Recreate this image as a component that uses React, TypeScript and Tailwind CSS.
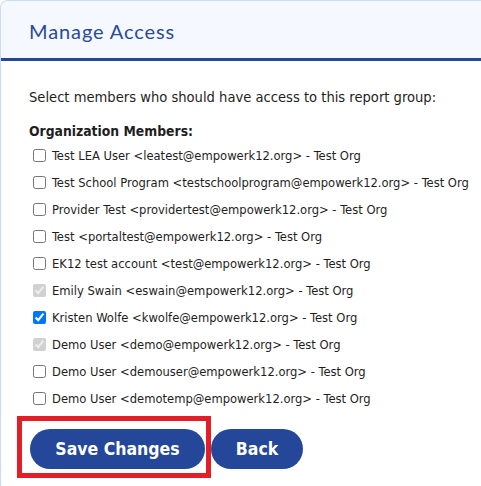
import React from "react";

type Member = { name: string; email: string; checked?: boolean; disabled?: boolean };

const members: Member[] = [
  { name: "Test LEA User", email: "leatest@empowerk12.org" },
  { name: "Test School Program", email: "testschoolprogram@empowerk12.org" },
  { name: "Provider Test", email: "providertest@empowerk12.org" },
  { name: "Test", email: "portaltest@empowerk12.org" },
  { name: "EK12 test account", email: "test@empowerk12.org" },
  { name: "Emily Swain", email: "eswain@empowerk12.org", checked: true, disabled: true },
  { name: "Kristen Wolfe", email: "kwolfe@empowerk12.org", checked: true },
  { name: "Demo User", email: "demo@empowerk12.org", checked: true, disabled: true },
  { name: "Demo User", email: "demouser@empowerk12.org" },
  { name: "Demo User", email: "demotemp@empowerk12.org" },
];

export default function App() {
  return (
    <div className="w-[481px] h-[486px] bg-white overflow-hidden relative">
      <div className="h-full border-l border-t border-[#c6dbf7] rounded-tl-[8px]">
        <div className="h-[60px] bg-[#f5f8fe] border-b-[3px] border-[#24479a] flex items-center pl-[28px] pt-[2px] rounded-tl-[8px]">
          <h1
            className="text-[20px] text-[#2a4a9a] tracking-[0.9px]"
            style={{ fontFamily: "Lato, 'Noto Sans', sans-serif" }}
          >
            Manage Access
          </h1>
        </div>
        <div
          className="pl-[28px] pt-[26px] text-[#1e1e1e]"
          style={{ fontFamily: "'DejaVu Sans Condensed', 'DejaVu Sans', sans-serif" }}
        >
          <p className="text-[14.6px] leading-[20px]">
            Select members who should have access to this report group:
          </p>
          <p className="mt-[14px] text-[13.8px] leading-[20px] font-bold">Organization Members:</p>
          <div className="mt-[1px] flex flex-col">
            {members.map((m, i) => (
              <label key={i} className="h-[27px] flex items-center text-[12.85px]">
                <input
                  type="checkbox"
                  defaultChecked={m.checked}
                  disabled={m.disabled}
                  className="w-[13px] h-[13px] ml-[4px] mr-[6px] m-0"
                />
                <span>
                  {m.name} &lt;{m.email}&gt; - Test Org
                </span>
              </label>
            ))}
          </div>
          <div className="mt-[17px] flex gap-[6px] pl-[1px]">
            <button className="h-[40px] w-[175px] rounded-full bg-[#24479a] text-white font-bold text-[17.5px]">
              Save Changes
            </button>
            <button className="h-[40px] w-[92px] rounded-full bg-[#24479a] text-white font-bold text-[17.5px]">
              Back
            </button>
          </div>
        </div>
      </div>
      <div className="absolute left-[17px] top-[416px] w-[194px] h-[62px] border-[5px] border-[#e41e26] pointer-events-none" />
    </div>
  );
}
